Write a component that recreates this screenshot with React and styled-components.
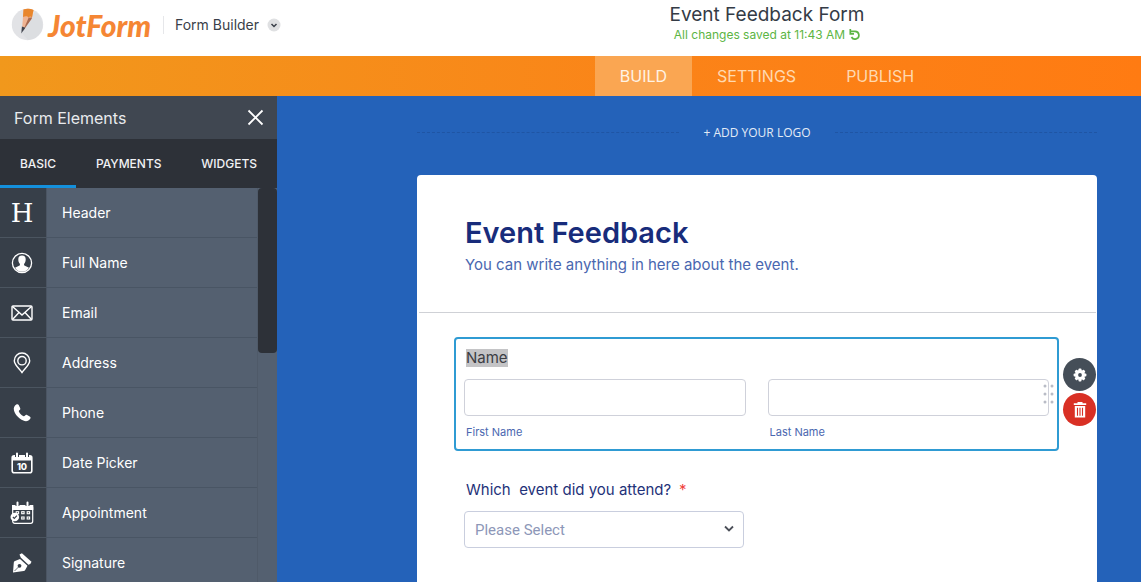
import React, { useState } from "react";
import styled, { createGlobalStyle, css } from "styled-components";

const GlobalStyle = createGlobalStyle`
  * {
    box-sizing: border-box;
  }
  body {
    margin: 0;
    font-family: Inter, "Liberation Sans", sans-serif;
  }
  button,
  input,
  select {
    font-family: inherit;
  }
  button {
    border: 0;
    padding: 0;
    background: none;
    cursor: pointer;
  }
`;

const Page = styled.div`
  display: flex;
  flex-direction: column;
  height: 100vh;
  overflow: hidden;
`;

/* top bar */
const TopBar = styled.header`
  display: grid;
  grid-template-columns: 393px 1fr;
  height: 56px;
  flex: none;
  background: #fff;
`;
const Brand = styled.div`
  display: flex;
  align-items: center;
  height: 49px;
  padding-left: 11px;
`;
const LogoLink = styled.a`
  display: flex;
  align-items: center;
  gap: 4px;
  width: 152px;
  color: #f58634;
  text-decoration: none;
`;
const Wordmark = styled.span`
  font-family: Lato, sans-serif;
  font-size: 30px;
  font-weight: 900;
  font-style: italic;
  line-height: 34px;
`;
const ProductButton = styled.button`
  display: flex;
  align-items: center;
  gap: 8px;
  height: 18px;
  padding-left: 11px;
  border-left: 1px solid #e6e7ea;
  color: #3a3f49;
  font-size: 14px;
`;
const FormInfo = styled.div`
  display: flex;
  flex-direction: column;
  align-items: center;
  padding-top: 2px;
`;
const FormTitle = styled.h1`
  margin: 0;
  color: #343b46;
  font-size: 19px;
  font-weight: 400;
  line-height: 25px;
`;
const SaveStatus = styled.div`
  display: flex;
  align-items: center;
  gap: 4px;
  color: #5cb544;
  font-size: 12px;
  line-height: 16px;
`;

/* orange navigation */
const MainNav = styled.nav`
  display: flex;
  justify-content: center;
  flex: none;
  height: 40px;
  padding-left: 393px;
  background: linear-gradient(90deg, #f1981c, #fb8318 60%, #ff7b12);
`;
const NavItem = styled.a`
  display: flex;
  align-items: center;
  padding: 0 25px;
  color: ${(p) => (p.$active ? "#fff3e4" : "#ffd9b0")};
  background: ${(p) => (p.$active ? "#faa652" : "transparent")};
  font-size: 16px;
  text-decoration: none;
`;

const Workspace = styled.div`
  display: flex;
  flex: 1;
  min-height: 0;
`;

/* left panel */
const Panel = styled.aside`
  display: flex;
  flex-direction: column;
  flex: none;
  width: 277px;
  background: #546070;
`;
const PanelHeader = styled.div`
  display: flex;
  align-items: center;
  justify-content: space-between;
  flex: none;
  height: 43px;
  padding: 0 13px 0 14px;
  background: #404751;
`;
const PanelTitle = styled.h2`
  margin: 0;
  color: #e9ebee;
  font-size: 16px;
  font-weight: 400;
`;
const CloseButton = styled.button`
  display: flex;
`;
const Tabs = styled.div`
  display: flex;
  flex: none;
  height: 49px;
  background: #2d3138;
`;
const Tab = styled.button`
  flex: 1 1 auto;
  border-bottom: 3px solid ${(p) => (p.$active ? "#1490dc" : "transparent")};
  padding-top: 3px;
  color: #f1f2f4;
  font-size: 12px;
  font-weight: 500;
`;
const PanelBody = styled.div`
  display: flex;
  flex: 1;
  min-height: 0;
  overflow: hidden;
`;
const ElementList = styled.ul`
  flex: 1;
  margin: 0;
  padding: 0;
  list-style: none;
`;
const ElementButton = styled.button`
  display: flex;
  width: 100%;
  height: 50px;
  text-align: left;
`;
const ElementIcon = styled.span`
  display: flex;
  align-items: center;
  justify-content: center;
  width: 46px;
  height: 50px;
  padding-right: 2px;
  border-bottom: 1px solid #4b5560;
  background: #373f49;
  color: #fff;
`;
const ElementName = styled.span`
  flex: 1;
  height: 50px;
  padding-left: 15px;
  border-bottom: 1px solid #495564;
  border-left: 1px solid #4b5563;
  color: #fff;
  font-size: 14px;
  line-height: 49px;
`;
const HeaderGlyph = styled.span`
  font-family: "DejaVu Serif", serif;
  font-size: 26px;
  line-height: 30px;
`;
const ScrollTrack = styled.div`
  width: 20px;
  border-left: 1px solid #4f5a69;
  background: #546070;
`;
const ScrollThumb = styled.div`
  height: 165px;
  border-radius: 4px;
  background: #2d3138;
`;

/* form canvas */
const Canvas = styled.main`
  flex: 1;
  padding: 0 44px 0 140px;
  background: #2462b9;
  overflow: hidden;
`;
const LogoRow = styled.div`
  display: flex;
  align-items: center;
  gap: 24px;
  height: 79px;
  padding-bottom: 7px;
`;
const Dashes = styled.span`
  flex: 1;
  border-top: 1px dashed #1f55a4;
`;
const AddLogo = styled.button`
  color: #e3ebf6;
  font-family: "Open Sans", sans-serif;
  font-size: 12px;
`;
const FormCard = styled.form`
  min-height: 480px;
  border-radius: 4px;
  background: #fff;
`;
const FormHead = styled.div`
  height: 138px;
  margin: 0 1px 24px 2px;
  padding: 40px 46px 0;
  border-bottom: 1px solid #cfd1d6;
`;
const Heading = styled.h2`
  margin: 0;
  color: #182c7b;
  font-size: 29px;
  font-weight: 600;
  line-height: 36px;
`;
const SubHeading = styled.p`
  margin: 4px 0 0;
  color: #4a67b0;
  font-size: 15px;
  line-height: 20px;
`;
const Field = styled.fieldset`
  position: relative;
  min-width: 0;
  margin: 0 38px 18px 37px;
  padding: 8px 8px 9px;
  border: 2px solid transparent;
  border-radius: 4px;
  ${(p) =>
    p.$selected &&
    css`
      border-color: #2f9bd3;
    `}
`;
const labelText = css`
  display: inline-block;
  margin: 0 0 12px 2px;
  font-size: 15px;
  line-height: 18px;
`;
const GroupLabel = styled.div`
  ${labelText}
  color: #3b3d43;
  background: #c4c4c6;
`;
const FieldLabel = styled.label`
  ${labelText}
  color: #1f3279;
  white-space: pre;
`;
const Required = styled.span`
  margin-left: 8px;
  color: #f0423c;
`;
const NameInputs = styled.div`
  display: grid;
  grid-template-columns: 1fr 1fr;
  gap: 22px;
`;
const NameInput = styled.div`
  display: flex;
  flex-direction: column;
  gap: 8px;
`;
const TextInput = styled.input`
  width: 100%;
  height: 37px;
  padding: 0 10px;
  border: 1px solid #cfd1da;
  border-radius: 4px;
`;
const SubLabel = styled.label`
  padding-left: 2px;
  color: #4a67b0;
  font-size: 11px;
  line-height: 16px;
`;
const SelectWrap = styled.div`
  position: relative;
  width: 280px;
  max-width: 100%;
`;
const Select = styled.select`
  display: block;
  width: 100%;
  height: 37px;
  padding: 0 10px;
  border: 1px solid #c9cede;
  border-radius: 4px;
  background: #fff;
  color: #8d97b8;
  font-family: Roboto, sans-serif;
  font-size: 15px;
  appearance: none;
`;
const SelectArrow = styled.svg`
  position: absolute;
  top: 14px;
  right: 10px;
  pointer-events: none;
`;
const DragHandle = styled.svg`
  position: absolute;
  top: 45px;
  right: 2px;
`;
const FieldActions = styled.div`
  position: absolute;
  top: 19px;
  left: 100%;
  display: flex;
  flex-direction: column;
  gap: 2px;
  margin-left: 6px;
`;
const RoundButton = styled.button`
  display: flex;
  align-items: center;
  justify-content: center;
  width: 33px;
  height: 33px;
  border-radius: 50%;
  background: ${(p) => (p.$danger ? "#d93025" : "#454e58")};
`;

const PencilLogo = () => (
  <svg width="33" height="33" viewBox="0 0 33 33" aria-hidden="true">
    <circle cx="16.5" cy="16.5" r="15.7" fill="#e2e3e6" />
    <path d="M11 25 24 4a15.700 15.700 0 0 1 6 20 15.700 15.700 0 0 1-13 8z" fill="#d5d7db" opacity=".45" />
    <path d="M12.500 1.500C16 .5 19.500.7 22.500 2L20.800 10.500 11 22z" fill="#efb493" />
    <path d="M12.500 1.500C16 .5 19.500.7 22.500 2L21 9.500c-1.500-1.500-2.500-1-3.400.2-1.200-1.600-3-1.800-5.600-.7z" fill="#e8862c" />
    <path d="M17.600 9.700 21 9.500 20.500 11 12 23z" fill="#a86a50" />
    <path d="M10.900 18.500 14.300 19.700 10.300 25.600z" fill="#3f434d" />
  </svg>
);

const UserIcon = () => (
  <svg width="22" height="22" viewBox="0 0 22 22">
    <circle cx="11" cy="11" r="9.600" fill="none" stroke="#fff" strokeWidth="1.300" />
    <path
      d="M11 3.500c2.500 0 3.800 1.600 3.700 4 0 2-.7 3.300-1.500 4.300-.3.500-.2 1.500.2 1.800l4.600 2.200A8.800 8.800 0 0 1 11 19.800a8.800 8.800 0 0 1-7-4l4.600-2.200c.4-.3.500-1.300.2-1.800-.8-1-1.500-2.300-1.500-4.300-.1-2.400 1.200-4 3.700-4z"
      fill="#fff"
    />
  </svg>
);

const MailIcon = () => (
  <svg width="22" height="18" viewBox="0 0 22 18" fill="none" stroke="#fff" strokeWidth="1.400">
    <rect x="1" y="2" width="20" height="14" rx="1" />
    <path d="M1.500 2.500 11 11l9.500-8.500M1.500 15.500 8 8.500M20.500 15.500 14 8.500" />
  </svg>
);

const PinIcon = () => (
  <svg width="20" height="22" viewBox="0 0 20 22" fill="none" stroke="#fff" strokeWidth="1.400">
    <path d="M10 20.500C7.500 17 2.300 12.600 2.300 8.700a7.700 7.700 0 0 1 15.400 0c0 3.900-5.200 8.300-7.700 11.800z" />
    <circle cx="10" cy="8.700" r="4.200" />
  </svg>
);

const PhoneIcon = () => (
  <svg width="20" height="20" viewBox="0 0 20 20">
    <path
      d="M4.300 1.600c1-.7 1.900-.5 2.400.4l1.400 2.900c.4.900.2 1.500-.5 2.100-.9.700-.9 1.200-.5 2 .9 1.800 2.200 3.100 4 3.900.8.400 1.300.4 2-.5.600-.7 1.200-.8 2-.4l2.600 1.500c1 .6 1.100 1.400.5 2.300-1.400 2.200-3.900 3-6.900 1.800C6.800 15.800 3 11.600 2 7.600c-.7-2.700.4-4.700 2.300-6z"
      fill="#fff"
    />
  </svg>
);

const DateIcon = () => (
  <svg width="22" height="22" viewBox="0 0 22 22">
    <rect x="1.200" y="3.700" width="19.600" height="17" rx="2" fill="none" stroke="#fff" strokeWidth="1.600" />
    <path d="M1 4h20v4.500H1z" fill="#fff" />
    <path d="M6 5V2M16 5V2" stroke="#373f49" strokeWidth="4" />
    <path d="M6 5V1.500M16 5V1.500" stroke="#fff" strokeWidth="2" strokeLinecap="round" />
    <text x="11" y="17.500" textAnchor="middle" fill="#fff" fontFamily="Inter" fontSize="9" fontWeight="800">
      10
    </text>
  </svg>
);

const AppointmentIcon = () => (
  <svg width="24" height="24" viewBox="0 0 24 24">
    <rect x="2.700" y="4.700" width="20" height="17.600" rx="2" fill="none" stroke="#fff" strokeWidth="1.200" />
    <path d="M2 4h21.300v5H2z" fill="#fff" />
    <path d="M7.500 5V2M17.500 5V2" stroke="#373f49" strokeWidth="4" />
    <path d="M7.500 5V1.500M17.500 5V1.500" stroke="#fff" strokeWidth="2" strokeLinecap="round" />
    <g fill="none" stroke="#fff" strokeWidth="1.100">
      <rect x="6.200" y="10.700" width="2.400" height="2" />
      <rect x="11.700" y="10.700" width="2.400" height="2" />
      <rect x="17.200" y="10.700" width="2.400" height="2" />
      <rect x="11.700" y="16" width="2.400" height="2" />
      <rect x="17.200" y="16" width="2.400" height="2" />
    </g>
    <circle cx="4.800" cy="16" r="4.300" fill="#fff" />
    <path d="m2.900 16 1.400 1.400 2.600-2.800" fill="none" stroke="#373f49" strokeWidth="1.100" />
  </svg>
);

const SignatureIcon = () => (
  <svg width="22" height="22" viewBox="0 0 22 22">
    <path
      d="M2 20.500 2.800 10.500c.1-.8.500-1.300 1.200-1.500L9 6.900l7.500 6.900-2.300 4.300c-.3.600-.8.900-1.500 1z"
      fill="#fff"
    />
    <circle cx="8.500" cy="13.800" r="1.900" fill="#373f49" />
    <path d="M7.500 15 3.500 19" stroke="#373f49" strokeWidth=".7" />
    <path d="m8.500 2.400 2.400-1.100 9.600 8.400-1.200 2.400-1.900.6-7.500-7z" fill="#fff" />
  </svg>
);

const GearIcon = () => (
  <svg width="14" height="14" viewBox="0 0 14 14">
    <g fill="#fff">
      {[0, 45, 90, 135].map((angle) => (
        <rect key={angle} x="5.500" y=".6" width="3" height="12.800" rx=".9" transform={`rotate(${angle} 7 7)`} />
      ))}
      <circle cx="7" cy="7" r="4.900" />
    </g>
    <circle cx="7" cy="7" r="1.900" fill="#454e58" />
  </svg>
);

const TrashIcon = () => (
  <svg width="14" height="18" viewBox="0 0 14 18">
    <path d="M4.500 1h5v1.200h3.700v1.700H.8V2.200h3.700zM1.800 5h10.400v11.500H1.800z" fill="#fff" />
    <path d="M4.500 6.700v8M7 6.700v8M9.500 6.700v8" stroke="#d93025" strokeWidth="1.100" />
  </svg>
);

const elements = [
  { name: "Header", icon: <HeaderGlyph>H</HeaderGlyph> },
  { name: "Full Name", icon: <UserIcon /> },
  { name: "Email", icon: <MailIcon /> },
  { name: "Address", icon: <PinIcon /> },
  { name: "Phone", icon: <PhoneIcon /> },
  { name: "Date Picker", icon: <DateIcon /> },
  { name: "Appointment", icon: <AppointmentIcon /> },
  { name: "Signature", icon: <SignatureIcon /> },
];

const tabs = ["BASIC", "PAYMENTS", "WIDGETS"];

const App = () => {
  const [activeTab, setActiveTab] = useState("BASIC");

  return (
    <Page>
      <GlobalStyle />
      <TopBar>
        <Brand>
          <LogoLink href="#">
            <PencilLogo />
            <Wordmark>JotForm</Wordmark>
          </LogoLink>
          <ProductButton type="button">
            Form Builder
            <svg width="14" height="14" viewBox="0 0 14 14">
              <circle cx="7" cy="7" r="6.500" fill="#dfe0e2" />
              <path d="m4.500 6 2.500 2.500L9.500 6" fill="none" stroke="#3a3f49" strokeWidth="1.500" />
            </svg>
          </ProductButton>
        </Brand>
        <FormInfo>
          <FormTitle>Event Feedback Form</FormTitle>
          <SaveStatus>
            All changes saved at 11:43 AM
            <svg width="11" height="12" viewBox="0 0 11 12" fill="none" stroke="#5cb544" strokeWidth="1.700">
              <path d="M1.500 2.300h4.600a3.900 3.900 0 1 1-3.600 5.700" />
              <path d="M1.300 0v4.800h3.700" />
            </svg>
          </SaveStatus>
        </FormInfo>
      </TopBar>

      <MainNav>
        <NavItem href="#build" $active>
          BUILD
        </NavItem>
        <NavItem href="#settings">SETTINGS</NavItem>
        <NavItem href="#publish">PUBLISH</NavItem>
      </MainNav>

      <Workspace>
        <Panel>
          <PanelHeader>
            <PanelTitle>Form Elements</PanelTitle>
            <CloseButton type="button" aria-label="Close">
              <svg width="17" height="17" viewBox="0 0 17 17" stroke="#fff" strokeWidth="1.800">
                <path d="m1.500 1.500 14 14M15.500 1.500l-14 14" />
              </svg>
            </CloseButton>
          </PanelHeader>
          <Tabs>
            {tabs.map((tab) => (
              <Tab key={tab} type="button" $active={tab === activeTab} onClick={() => setActiveTab(tab)}>
                {tab}
              </Tab>
            ))}
          </Tabs>
          <PanelBody>
            <ElementList>
              {elements.map((element) => (
                <li key={element.name}>
                  <ElementButton type="button">
                    <ElementIcon aria-hidden="true">{element.icon}</ElementIcon>
                    <ElementName>{element.name}</ElementName>
                  </ElementButton>
                </li>
              ))}
            </ElementList>
            <ScrollTrack>
              <ScrollThumb />
            </ScrollTrack>
          </PanelBody>
        </Panel>

        <Canvas>
          <LogoRow>
            <Dashes />
            <AddLogo type="button">+ ADD YOUR LOGO</AddLogo>
            <Dashes />
          </LogoRow>
          <FormCard>
            <FormHead>
              <Heading>Event Feedback</Heading>
              <SubHeading>You can write anything in here about the event.</SubHeading>
            </FormHead>

            <Field $selected aria-labelledby="name-label">
              <GroupLabel id="name-label">Name</GroupLabel>
              <NameInputs>
                <NameInput>
                  <TextInput id="first" type="text" />
                  <SubLabel htmlFor="first">First Name</SubLabel>
                </NameInput>
                <NameInput>
                  <TextInput id="last" type="text" />
                  <SubLabel htmlFor="last">Last Name</SubLabel>
                </NameInput>
              </NameInputs>
              <DragHandle width="12" height="20" viewBox="0 0 12 20" fill="#b9bcc6">
                {[2, 10, 18].map((y) => (
                  <React.Fragment key={y}>
                    <circle cx="2" cy={y} r="1.500" />
                    <circle cx="9" cy={y} r="1.500" />
                  </React.Fragment>
                ))}
              </DragHandle>
              <FieldActions>
                <RoundButton type="button" aria-label="Properties">
                  <GearIcon />
                </RoundButton>
                <RoundButton type="button" aria-label="Delete" $danger>
                  <TrashIcon />
                </RoundButton>
              </FieldActions>
            </Field>

            <Field as="div">
              <FieldLabel htmlFor="event">
                {"Which  event did you attend?"}
                <Required>*</Required>
              </FieldLabel>
              <SelectWrap>
                <Select id="event" defaultValue="">
                  <option value="">Please Select</option>
                </Select>
                <SelectArrow width="10" height="8" viewBox="0 0 10 8" fill="none" stroke="#4b4f58" strokeWidth="1.800">
                  <path d="m1 1.500 4 4 4-4" />
                </SelectArrow>
              </SelectWrap>
            </Field>
          </FormCard>
        </Canvas>
      </Workspace>
    </Page>
  );
};

export default App;
